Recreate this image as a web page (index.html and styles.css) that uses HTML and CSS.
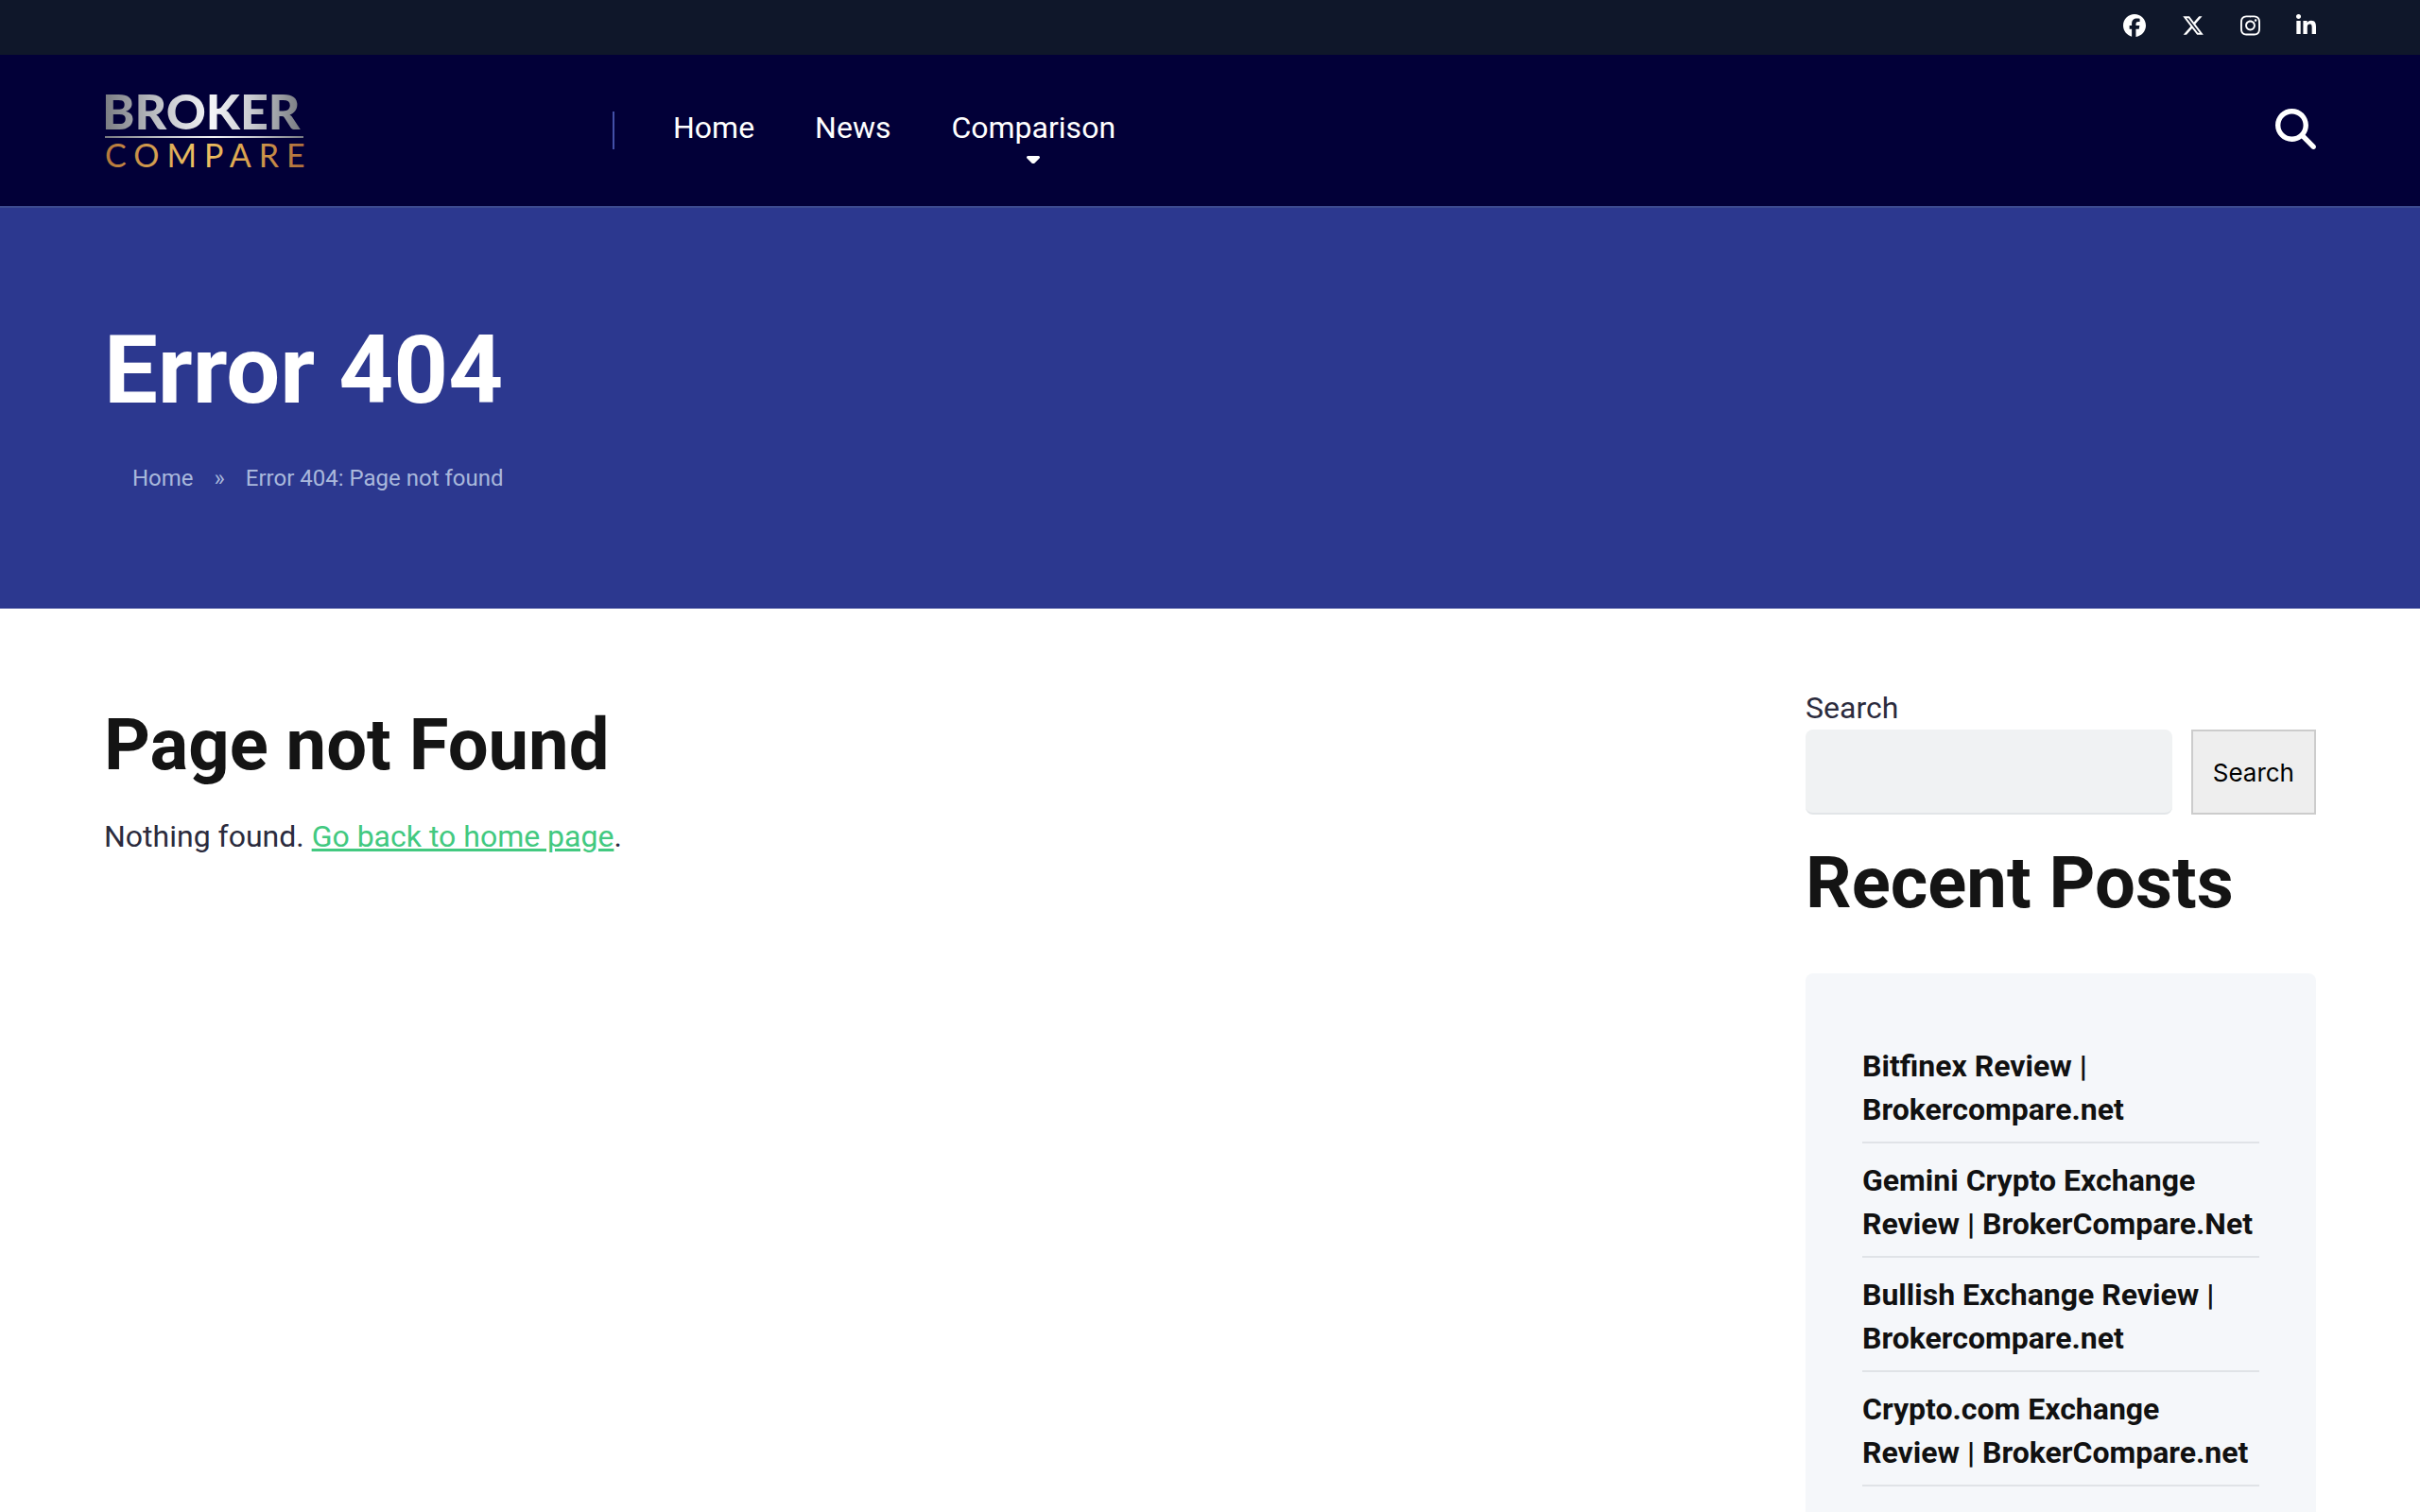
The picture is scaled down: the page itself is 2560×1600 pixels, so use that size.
FILE: index.html
```html
<!DOCTYPE html>
<html lang="en">
<head>
    <meta charset="UTF-8">
    <meta name="viewport" content="width=device-width, initial-scale=1.0">
    <title>Page not found - Broker Compare</title>
    <link rel="stylesheet" href="styles.css">
</head>
<body>

<!-- Social links -->
<div class="top-bar">
    <a href="#" aria-label="Facebook">
        <svg class="social-icon" viewBox="0 0 512 512"><path d="M512 256C512 114.6 397.4 0 256 0S0 114.6 0 256C0 376 82.7 476.8 194.2 504.5V334.2H141.4V256h52.8V222.3c0-87.1 39.4-127.5 125-127.5c16.2 0 44.2 3.2 55.7 6.4V172c-6-.6-16.5-1-29.6-1c-42 0-58.2 15.9-58.2 57.2V256h83.6l-14.4 78.2H287V510.1C413.8 494.8 512 386.9 512 256h0z"/></svg>
    </a>
    <a href="#" aria-label="X">
        <svg class="social-icon" viewBox="0 0 512 512"><path d="M389.2 48h70.6L305.6 224.2 487 464H345L233.7 318.6 106.5 464H35.8L200.7 275.5 26.8 48H172.4L272.9 180.9 389.2 48zM364.4 421.8h39.1L151.1 88h-42L364.4 421.8z"/></svg>
    </a>
    <a href="#" aria-label="Instagram">
        <svg class="social-icon" viewBox="0 0 448 512"><path d="M224.1 141c-63.6 0-114.9 51.3-114.9 114.9s51.3 114.9 114.9 114.9S339 319.5 339 255.9 287.7 141 224.1 141zm0 189.6c-41.1 0-74.7-33.5-74.7-74.7s33.5-74.7 74.7-74.7 74.7 33.5 74.7 74.7-33.6 74.7-74.7 74.7zm146.4-194.3c0 14.9-12 26.8-26.8 26.8-14.9 0-26.8-12-26.8-26.8s12-26.8 26.8-26.8 26.8 12 26.8 26.8zm76.1 27.2c-1.7-35.9-9.9-67.7-36.2-93.9-26.2-26.2-58-34.4-93.9-36.2-37-2.1-147.9-2.1-184.9 0-35.8 1.7-67.6 9.9-93.9 36.1s-34.4 58-36.2 93.9c-2.1 37-2.1 147.9 0 184.9 1.7 35.9 9.9 67.7 36.2 93.9s58 34.4 93.9 36.2c37 2.1 147.9 2.1 184.9 0 35.9-1.7 67.7-9.9 93.9-36.2 26.2-26.2 34.4-58 36.2-93.9 2.1-37 2.1-147.8 0-184.8zM398.8 388c-7.8 19.6-22.9 34.7-42.6 42.6-29.5 11.7-99.5 9-132.1 9s-102.7 2.6-132.1-9c-19.6-7.8-34.7-22.9-42.6-42.6-11.7-29.5-9-99.5-9-132.1s-2.6-102.7 9-132.1c7.8-19.6 22.9-34.7 42.6-42.6 29.5-11.7 99.5-9 132.1-9s102.7-2.6 132.1 9c19.6 7.8 34.7 22.9 42.6 42.6 11.7 29.5 9 99.5 9 132.1s2.7 102.7-9 132.1z"/></svg>
    </a>
    <a href="#" aria-label="LinkedIn">
        <svg class="social-icon" viewBox="0 0 448 512"><path d="M100.28 448H7.4V148.9h92.88zM53.79 108.1C24.09 108.1 0 83.5 0 53.8a53.79 53.79 0 0 1 107.58 0c0 29.7-24.1 54.3-53.79 54.3zM447.9 448h-92.68V302.4c0-34.7-.7-79.2-48.29-79.2-48.29 0-55.69 37.7-55.69 76.7V448h-92.78V148.9h89.08v40.8h1.3c12.4-23.5 42.69-48.3 87.88-48.3 94 0 111.28 61.9 111.28 142.3V448z"/></svg>
    </a>
</div>

<!-- Logo, menu and search -->
<header class="header">
    <a href="#" class="logo" aria-label="Broker Compare">
        <svg width="228" height="104" viewBox="0 0 228 104">
            <defs>
                <linearGradient id="silver">
                    <stop offset="0" stop-color="#77797f"/>
                    <stop offset="0.3" stop-color="#c3c5ca"/>
                    <stop offset="0.55" stop-color="#f4f5f8"/>
                    <stop offset="0.75" stop-color="#c9cbd0"/>
                    <stop offset="1" stop-color="#777a80"/>
                </linearGradient>
                <linearGradient id="gold">
                    <stop offset="0" stop-color="#b5763a"/>
                    <stop offset="0.45" stop-color="#efc464"/>
                    <stop offset="0.65" stop-color="#dfa850"/>
                    <stop offset="1" stop-color="#a8683a"/>
                </linearGradient>
            </defs>
            <text class="logo-broker" x="2" y="51" fill="url(#silver)">BROKER</text>
            <rect x="5" y="58" width="210" height="2" fill="url(#silver)"/>
            <text class="logo-compare" x="5" y="91" fill="url(#gold)">COMPARE</text>
        </svg>
    </a>
    <nav class="menu">
        <a href="#">Home</a>
        <a href="#">News</a>
        <a href="#" class="has-children">Comparison
            <svg class="caret" viewBox="0 190 320 194"><path d="M137.4 374.6c12.5 12.5 32.8 12.5 45.3 0l128-128c9.2-9.2 11.9-22.9 6.9-34.9s-16.6-19.8-29.6-19.8L32 192c-12.9 0-24.6 7.8-29.6 19.8s-2.2 25.7 6.9 34.9l128 128z"/></svg>
        </a>
    </nav>
    <button type="button" class="search-toggle" aria-label="Open search">
        <svg viewBox="0 0 512 512"><path d="M416 208c0 45.9-14.9 88.3-40 122.7L502.6 457.4c12.5 12.5 12.5 32.8 0 45.3s-32.8 12.5-45.3 0L330.7 376c-34.4 25.2-76.8 40-122.7 40C93.1 416 0 322.9 0 208S93.1 0 208 0S416 93.1 416 208zM208 352a144 144 0 1 0 0-288 144 144 0 1 0 0 288z"/></svg>
    </button>
</header>

<!-- Page title -->
<section class="hero">
    <h1>Error 404</h1>
    <div class="breadcrumbs">
        <a href="#">Home</a>
        <span>»</span>
        <span>Error 404: Page not found</span>
    </div>
</section>

<div class="page">
    <main class="content">
        <h2>Page not Found</h2>
        <p>Nothing found. <a href="#">Go back to home page</a>.</p>
    </main>

    <aside class="sidebar">
        <form class="search-form">
            <label for="search">Search</label>
            <div class="search-row">
                <input type="search" id="search">
                <button type="submit">Search</button>
            </div>
        </form>
        <h2>Recent Posts</h2>
        <ul class="posts">
            <li><a href="#">Bitfinex Review | Brokercompare.net</a></li>
            <li><a href="#">Gemini Crypto Exchange Review | BrokerCompare.Net</a></li>
            <li><a href="#">Bullish Exchange Review | Brokercompare.net</a></li>
            <li><a href="#">Crypto.com Exchange Review | BrokerCompare.net</a></li>
            <li><a href="#">Kraken Exchange Review | Brokercompare.net</a></li>
        </ul>
    </aside>
</div>

</body>
</html>
```
FILE: styles.css
```css
* {
    box-sizing: border-box;
}

body {
    margin: 0;
    font-family: Roboto, "Liberation Sans", sans-serif;
    font-size: 32px;
    line-height: 46px;
    color: #2b2b3d;
    background-color: #fff;
}

h1,
h2 {
    margin: 0;
    font-weight: 700;
}

h2 {
    font-size: 76px;
    line-height: 92px;
    color: #141414;
}

/* Top bar */
.top-bar {
    display: flex;
    justify-content: flex-end;
    gap: 38px;
    padding: 15px 110px 19px;
    background-color: #0f172a;
}

.top-bar a {
    display: flex;
}

.social-icon {
    height: 24px;
    fill: #fff;
}

/* Header */
.header {
    display: flex;
    align-items: center;
    height: 162px;
    padding: 0 110px;
    background-color: #020038;
    border-bottom: 2px solid #3c4a90;
}

.logo {
    display: flex;
    width: 542px;
    margin-left: -4px;
}

.logo-broker {
    font-family: Lato, sans-serif;
    font-size: 52px;
    font-weight: 900;
}

.logo-compare {
    font-family: Lato, sans-serif;
    font-size: 34px;
    letter-spacing: 8px;
}

.menu {
    display: flex;
    align-items: center;
    gap: 64px;
    height: 40px;
    padding-left: 62px;
    border-left: 2px solid #4350a8;
}

.menu a {
    position: relative;
    padding-bottom: 6px;
    color: #fff;
    text-decoration: none;
}

/* Arrow under items with a submenu */
.caret {
    position: absolute;
    left: 50%;
    bottom: -9px;
    width: 14px;
    margin-left: -7px;
    fill: #fff;
}

.search-toggle {
    display: flex;
    margin: 0 0 4px auto;
    padding: 0;
    background: none;
    border: none;
    cursor: pointer;
}

.search-toggle svg {
    width: 43px;
    fill: #fff;
}

/* Hero */
.hero {
    padding: 112px 110px 117px;
    background-color: #2c388f;
    color: #fff;
}

.hero h1 {
    font-size: 101px;
    line-height: 120px;
}

.breadcrumbs {
    display: flex;
    gap: 22px;
    margin-top: 33px;
    padding-left: 30px;
    font-size: 24px;
    line-height: 42px;
    color: #a9b8dc;
}

.breadcrumbs a {
    color: inherit;
    text-decoration: none;
}

/* Content and sidebar */
.page {
    display: flex;
    justify-content: space-between;
    padding: 82px 110px;
}

.content {
    padding-top: 16px;
}

.content p {
    margin: 28px 0 0;
}

.content a {
    color: #42c980;
}

.sidebar {
    width: 540px;
}

.search-form label {
    display: block;
}

.search-row {
    display: flex;
    gap: 20px;
}

.search-row input {
    flex-grow: 1;
    min-width: 0;
    height: 90px;
    padding: 0 20px;
    font: inherit;
    background-color: #f0f2f3;
    border: none;
    border-bottom: 2px solid #e2e5e8;
    border-radius: 8px;
}

.search-row button {
    padding: 0 21px;
    font-family: Inter, sans-serif;
    font-size: 26px;
    color: #000;
    background-color: #eee;
    border: 2px solid #ccc;
    cursor: pointer;
}

.sidebar h2 {
    margin-top: 26px;
}

.posts {
    margin: 50px 0 0;
    padding: 59px 60px;
    list-style: none;
    background-color: #f5f7fa;
    border-radius: 8px;
}

.posts li {
    padding: 16px 0 11px;
    border-bottom: 2px solid #e0e3e7;
}

.posts a {
    font-weight: 700;
    color: #111;
    text-decoration: none;
}
```
